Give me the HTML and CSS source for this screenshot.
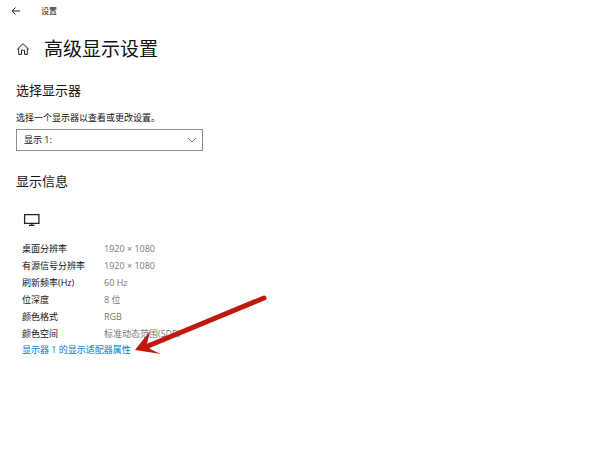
FILE: index.html
```html
<!DOCTYPE html>
<html lang="zh-CN">
<head>
<meta charset="utf-8">
<meta name="viewport" content="width=device-width, initial-scale=1">
<title>设置</title>
<link rel="stylesheet" href="styles.css">
</head>
<body>
<header class="titlebar">
  <button class="back" type="button" aria-label="返回">
    <svg width="10" height="10" viewBox="0 0 10 10"><path d="M9 5H1M4.5 1.5L1 5l3.5 3.5"/></svg>
  </button>
  <span class="app-name">设置</span>
</header>
<main class="page">
  <div class="heading">
    <a class="home" href="#" aria-label="主页">
      <svg width="14" height="14" viewBox="0 0 14 14"><path d="M1.2 7.3L7 1.7l5.8 5.6M2.7 6.2v6.2h2.8V8.2h3v4.2h2.8V6.2"/></svg>
    </a>
    <h1>高级显示设置</h1>
  </div>

  <section class="choose">
    <h2>选择显示器</h2>
    <label class="hint" for="display">选择一个显示器以查看或更改设置。</label>
    <div class="picker">
      <select id="display"><option>显示 1:</option></select>
      <svg class="chevron" width="10" height="6" viewBox="0 0 10 6"><path d="M1 1l4 4 4-4"/></svg>
    </div>
  </section>

  <section class="info">
    <h2>显示信息</h2>
    <div class="details">
      <svg class="monitor" width="18" height="14" viewBox="0 0 18 14"><path d="M1.6 1.6h14.3v8.8H1.6zM8.8 10.4v2M6 12.4h5.6"/></svg>
      <dl class="specs">
        <dt>桌面分辨率</dt><dd>1920 × 1080</dd>
        <dt>有源信号分辨率</dt><dd>1920 × 1080</dd>
        <dt>刷新频率(Hz)</dt><dd>60 Hz</dd>
        <dt>位深度</dt><dd>8 位</dd>
        <dt>颜色格式</dt><dd>RGB</dd>
        <dt>颜色空间</dt><dd>标准动态范围(SDR)</dd>
      </dl>
      <div class="adapter">
        <a href="#">显示器 1 的显示适配器属性</a>
        <svg class="pointer" width="134" height="62" viewBox="0 0 134 62">
          <path class="shaft" d="M130 4L14 52"/>
          <path class="head" d="M1 56L16 37L13 50L16 55L27 60Z"/>
        </svg>
      </div>
    </div>
  </section>
</main>
</body>
</html>
```
FILE: styles.css
```css
* {
  box-sizing: border-box;
}

body {
  margin: 0;
  background: #fff;
  color: #111;
  font: 9px/16px "Open Sans", "Noto Sans CJK SC", sans-serif;
}

svg {
  display: block;
  fill: none;
  stroke: #222;
}

h1,
h2 {
  margin: 0;
  font-weight: 400;
}

h1 {
  font-size: 19px;
  line-height: 28px;
}

h2 {
  font-size: 13px;
  line-height: 20px;
}

.titlebar {
  display: flex;
  align-items: center;
  gap: 20px;
  height: 22px;
  padding-left: 11px;
}

.back {
  padding: 0;
  border: 0;
  background: none;
}

.app-name {
  font-size: 8px;
}

.page {
  padding: 13px 16px;
}

.heading {
  display: flex;
  align-items: center;
  gap: 14px;
}

.choose {
  margin-top: 17px;
}

.hint {
  display: block;
  margin-top: 10px;
}

.picker {
  position: relative;
  max-width: 187px;
  margin-top: 3px;
}

.picker select {
  display: block;
  width: 100%;
  height: 22px;
  padding: 0 7px;
  border: 1px solid #8a8a8a;
  border-radius: 0;
  appearance: none;
  background: #fff;
  color: inherit;
  font: inherit;
}

.chevron {
  position: absolute;
  top: 8px;
  right: 6px;
  stroke: #777;
  pointer-events: none;
}

.info {
  margin-top: 20px;
}

.details {
  padding: 22px 6px 0;
}

.monitor {
  margin-left: 1px;
  stroke-width: 1.3;
}

.specs {
  display: grid;
  grid-template-columns: 82px 1fr;
  margin: 13px 0 0;
  line-height: 17px;
}

.specs dd {
  margin: 0;
  color: #777;
}

.adapter {
  position: relative;
  width: fit-content;
}

.adapter a {
  color: #0078d7;
  text-decoration: none;
}

.pointer {
  position: absolute;
  left: 112px;
  bottom: 2px;
  pointer-events: none;
}

.pointer .shaft {
  stroke: #c0180c;
  stroke-width: 5;
  stroke-linecap: round;
}

.pointer .head {
  fill: #c0180c;
  stroke: none;
}
```
